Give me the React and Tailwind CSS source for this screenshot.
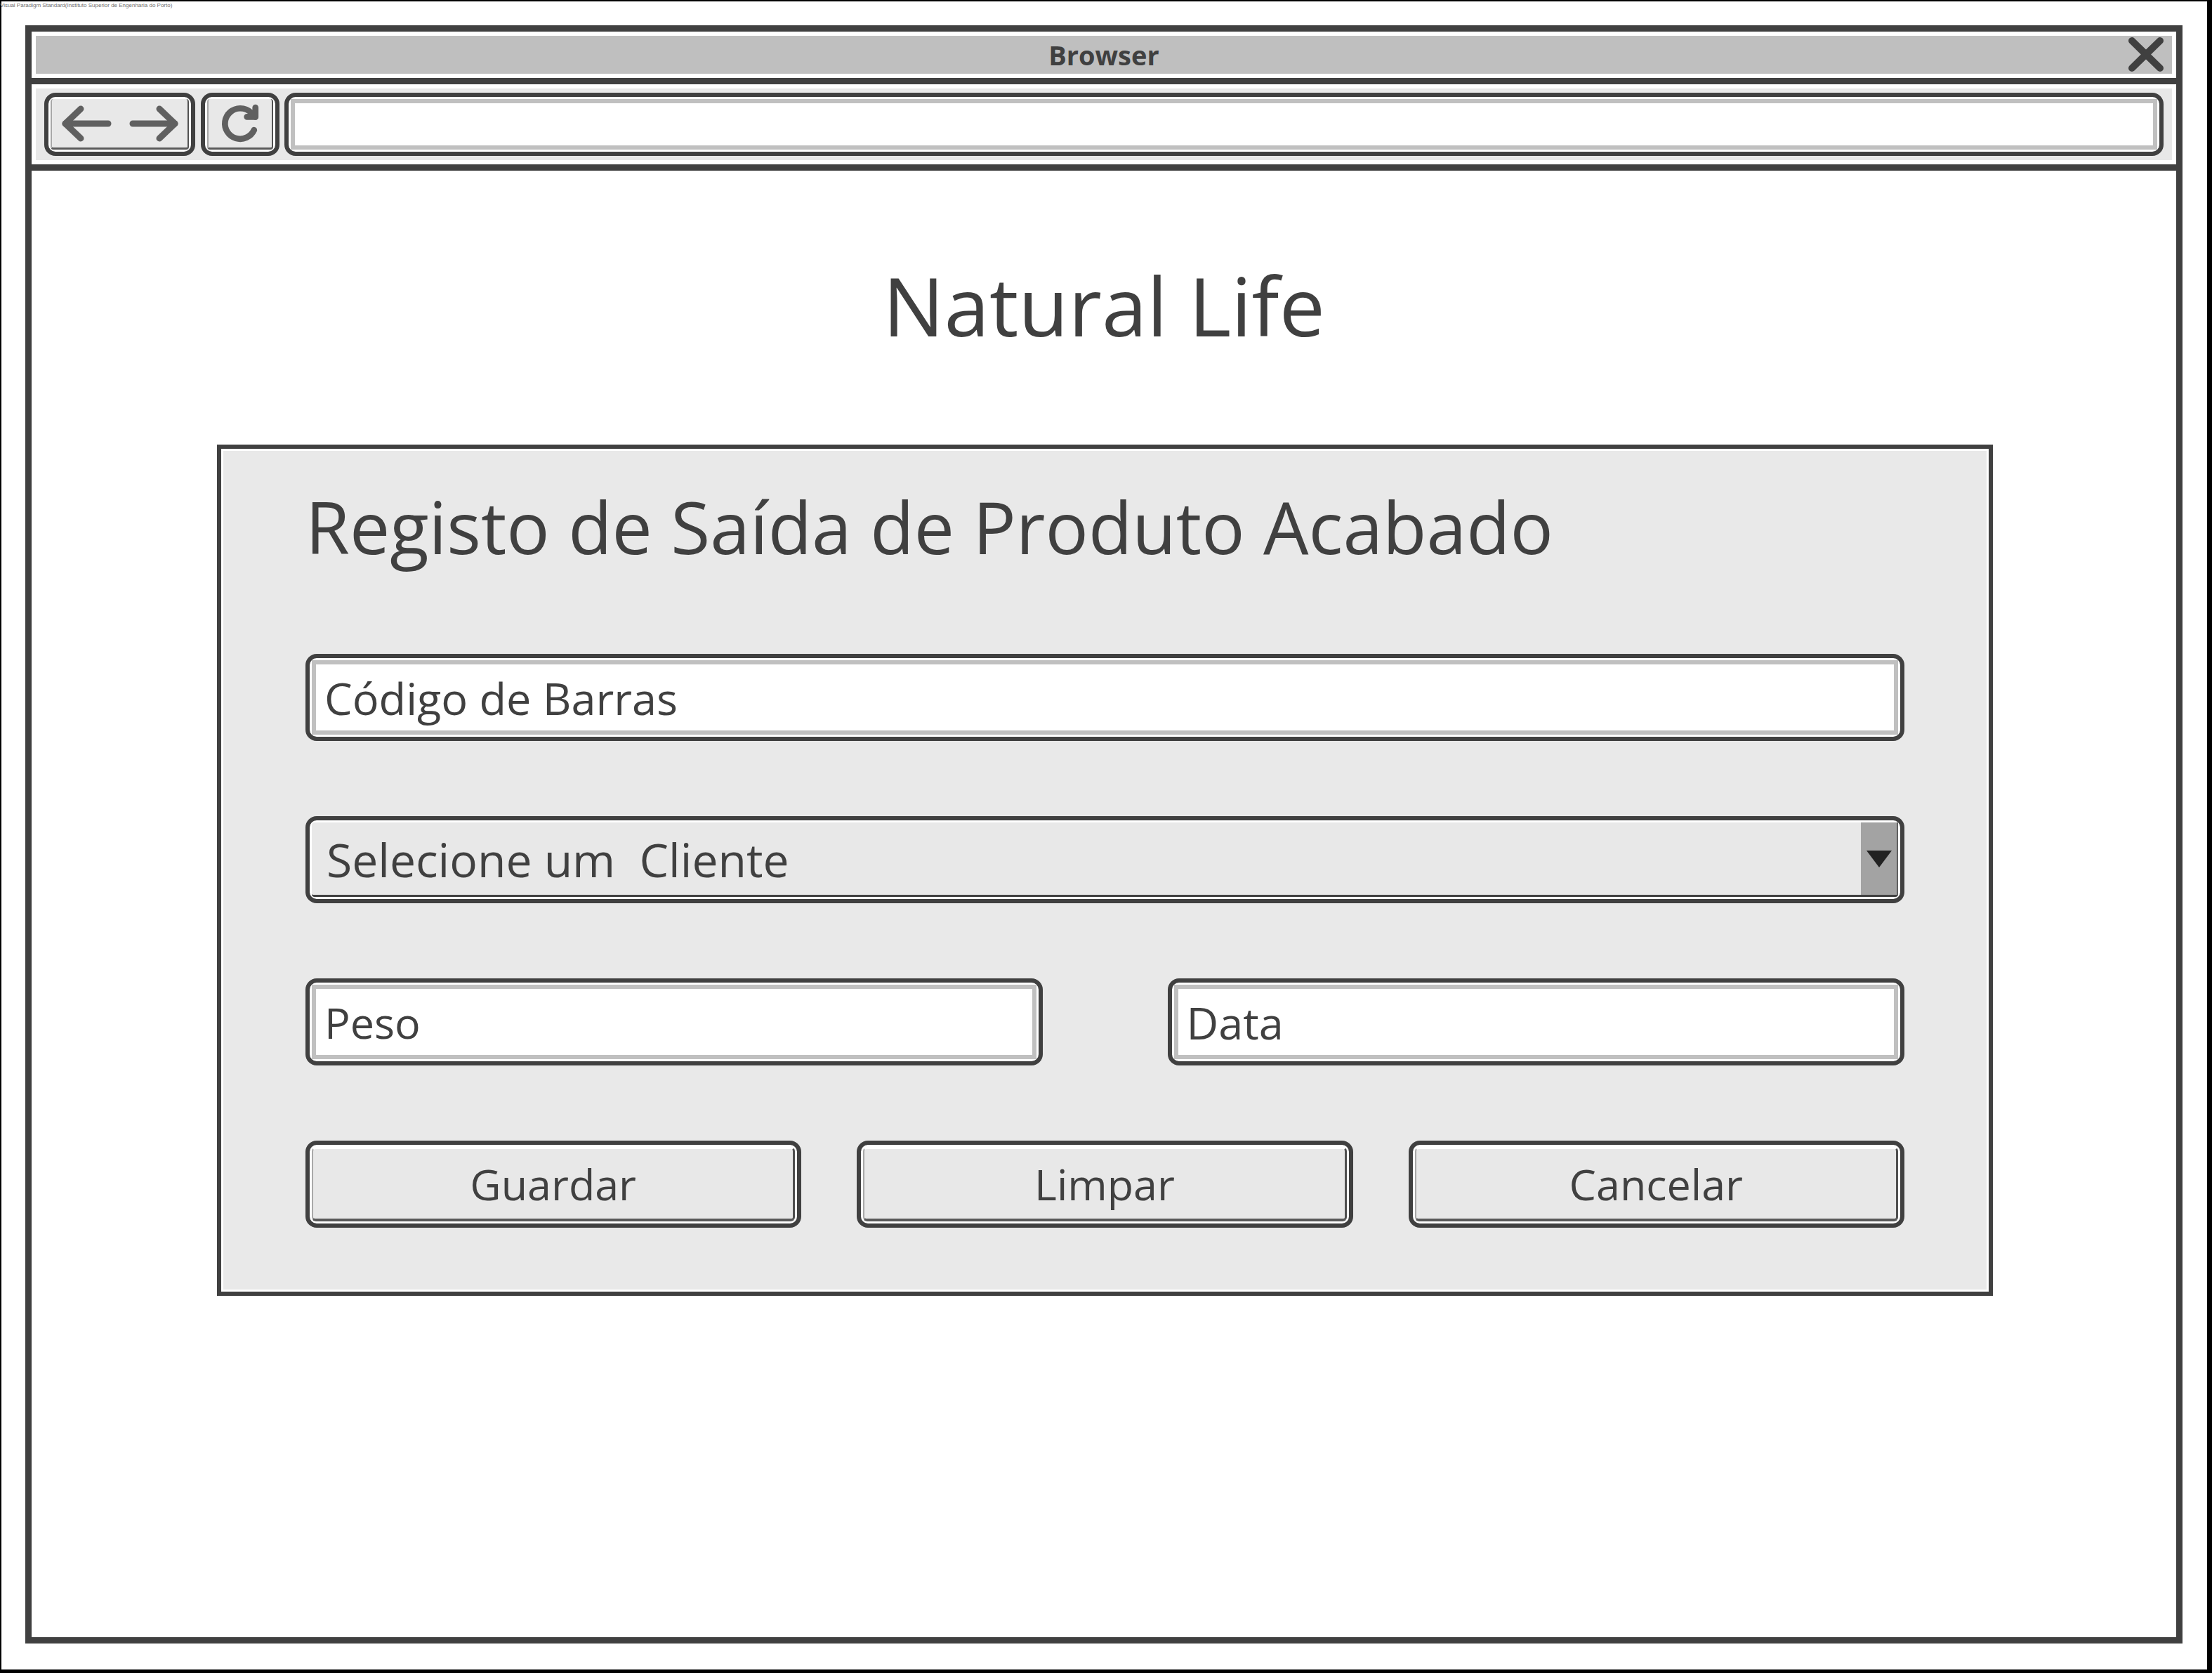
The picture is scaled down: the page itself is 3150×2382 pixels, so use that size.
import React from "react";

function NavArrows() {
  return (
    <svg width="172" height="58" viewBox="0 0 172 58" fill="none" stroke="#606060" strokeWidth="9" strokeLinecap="round" strokeLinejoin="round">
      <path d="M8 29 H69" />
      <path d="M30 8 L8 29 L30 50" />
      <path d="M104 29 H164" />
      <path d="M142 8 L164 29 L142 50" />
    </svg>
  );
}

function RefreshIcon() {
  return (
    <svg width="58" height="58" viewBox="0 0 24 24" fill="none" stroke="#606060" strokeWidth="3.6" strokeLinecap="round" strokeLinejoin="round">
      <path d="M20.2 15.8 A9 9 0 1 1 12 3 c2.52 0 4.93 1 6.74 2.74 L21 8" />
      <path d="M21 2.5 V8 H16" />
    </svg>
  );
}

function CloseIcon() {
  return (
    <svg width="52" height="50" viewBox="0 0 52 50" fill="none" stroke="#404040" strokeWidth="10" strokeLinecap="round">
      <path d="M6 5 L46 44" />
      <path d="M46 5 L6 44" />
    </svg>
  );
}

function TextField({ label, big }) {
  return (
    <div className="h-[124px] rounded-[16px] border-[6px] border-[#404040] bg-white p-[3px]">
      <div className="flex h-full items-center border-[6px] border-[#c0c0c0] bg-white pl-[12px]">
        <span className={big ? "text-[63px] leading-none text-[#404040]" : "text-[61px] leading-none text-[#404040]"}>{label}</span>
      </div>
    </div>
  );
}

function Button({ label }) {
  return (
    <div className="h-[124px] rounded-[16px] border-[6px] border-[#404040] bg-white p-[3px]">
      <div className="flex h-full items-center justify-center rounded-[6px] border-t-[3px] border-b-[4px] border-l-[2px] border-r-[3px] border-t-white border-b-[#5a5a5a] border-l-[#a8a8a8] border-r-[#505050] bg-[#e8e8e8]">
        <span className="text-[61px] leading-none text-[#404040]">{label}</span>
      </div>
    </div>
  );
}

export default function App() {
  return (
    <div className="relative h-[2382px] w-[3150px] border-b-[5px] border-l-2 border-r-[7px] border-t-2 border-black bg-white font-['Open_Sans',sans-serif]">
      <div className="absolute left-[-2px] top-[2px] whitespace-nowrap font-['Liberation_Sans',sans-serif] text-[8px] leading-none text-[#707070]">
        Visual Paradigm Standard(Instituto Superior de Engenharia do Porto)
      </div>

      <div className="ml-[34px] mt-[34px] flex h-[2304px] w-[3072px] flex-col border-[9px] border-[#404040]">
        {/* Title bar */}
        <div className="p-[6px]">
          <div className="grid h-[54px] grid-cols-[1fr_auto_1fr] items-center bg-[#bfbfbf]">
            <div />
            <div className="text-[38px] font-bold leading-none text-[#404040]">Browser</div>
            <div className="flex justify-end pr-[11px]">
              <CloseIcon />
            </div>
          </div>
        </div>
        <div className="h-[9px] bg-[#404040]" />

        {/* Toolbar */}
        <div className="p-[6px]">
          <div className="flex h-[102px] items-center bg-[#e8e8e8] px-[12px]">
            <div className="h-[90px] w-[215px] rounded-[16px] border-[6px] border-[#404040] bg-white p-[3px]">
              <div className="flex h-full items-center justify-center rounded-[4px] border-b-[3px] border-l-[2px] border-r-[2px] border-b-[#5a5a5a] border-l-[#a8a8a8] border-r-[#505050] bg-[#e8e8e8]">
                <NavArrows />
              </div>
            </div>
            <div className="ml-[8px] h-[90px] w-[112px] rounded-[16px] border-[6px] border-[#404040] bg-white p-[3px]">
              <div className="flex h-full items-center justify-center rounded-[4px] border-b-[3px] border-l-[2px] border-r-[2px] border-b-[#5a5a5a] border-l-[#a8a8a8] border-r-[#505050] bg-[#e8e8e8]">
                <RefreshIcon />
              </div>
            </div>
            <div className="ml-[7px] h-[90px] flex-1 rounded-[16px] border-[6px] border-[#404040] bg-white p-[3px]">
              <div className="h-full border-[6px] border-[#c0c0c0] bg-white" />
            </div>
          </div>
        </div>
        <div className="h-[9px] bg-[#404040]" />

        {/* Content */}
        <div className="flex-1">
          <div className="flex h-[390px] justify-center pt-[133px]">
            <div className="text-[116px] leading-none text-[#404040]">Natural Life</div>
          </div>

          <div className="ml-[264px] w-[2529px] border-[6px] border-[#404040]">
            <div className="border-[3px] border-white bg-[#e9e9e9] px-[117px] pb-[88px] pt-[57px]">
              <div className="mb-[130px] text-[102px] leading-none text-[#404040]">
                Registo de Saída de Produto Acabado
              </div>

              <div className="flex flex-col gap-[107px]">
                <TextField label="Código de Barras" big />

                <div className="h-[124px] rounded-[16px] border-[6px] border-[#404040] bg-white p-[3px]">
                  <div className="flex h-full items-stretch rounded-[4px] border-b-[3px] border-b-[#404040] bg-[#e8e8e8]">
                    <div className="flex flex-1 items-center pl-[21px]">
                      <span className="whitespace-pre text-[66px] leading-none text-[#404040]">Selecione um  Cliente</span>
                    </div>
                    <div className="flex w-[51px] items-center justify-center bg-[#a3a3a3]">
                      <svg width="36" height="24" viewBox="0 0 36 24">
                        <path d="M0 0 H36 L18 24 Z" fill="#222222" />
                      </svg>
                    </div>
                    <div className="w-[2px] bg-[#606060]" />
                  </div>
                </div>

                <div className="grid grid-cols-2 gap-[178px]">
                  <TextField label="Peso" />
                  <TextField label="Data" big />
                </div>

                <div className="grid grid-cols-3 gap-[79px]">
                  <Button label="Guardar" />
                  <Button label="Limpar" />
                  <Button label="Cancelar" />
                </div>
              </div>
            </div>
          </div>
        </div>
      </div>
    </div>
  );
}
